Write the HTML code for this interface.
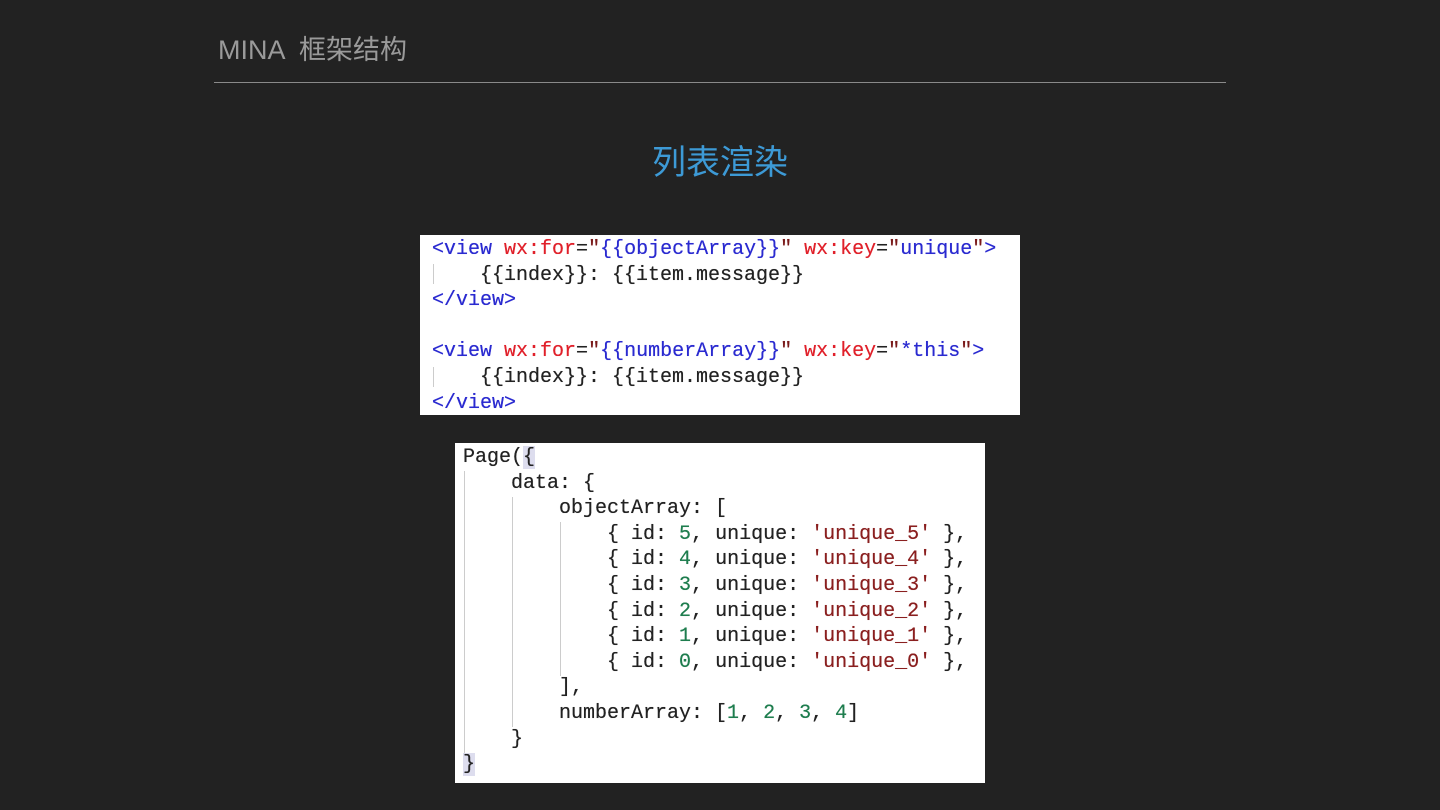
<!DOCTYPE html>
<html><head><meta charset="utf-8"><style>
body{margin:0;width:1440px;height:810px;background:#222222;position:relative;overflow:hidden;font-family:"Liberation Sans","Noto Sans CJK SC",sans-serif}
.t{position:absolute;left:218px;top:32px;font-size:27px;color:#9a9a9a;line-height:36px;white-space:pre}
.hr{position:absolute;left:214px;top:82px;width:1012px;height:1px;background:#8a8a8a}
.h{position:absolute;left:0;width:1440px;top:141px;text-align:center;font-size:34px;color:#3d9ad6;line-height:44px}
.box{position:absolute;background:#fff;font-family:"Liberation Mono",monospace;font-size:20px;color:#222;overflow:hidden;text-shadow:0 0 0.4px currentColor}
.ln{height:25.6px;line-height:25.6px;white-space:pre}
.b{color:#2a2ad0}.r{color:#e0202a}.m{color:#8a1f1f}.g{color:#1e7d4e}.k{color:#7a1a1a}
.bar{position:absolute;width:1px;background:#ccc}
.in{position:absolute}
</style></head><body>
<div class="t">MINA  框架结构</div>
<div class="hr"></div>
<div class="h">列表渲染</div>
<div class="box" style="left:420px;top:235px;width:600px;height:180px;">
<div class="bar" style="left:13px;top:29px;height:20px"></div>
<div class="bar" style="left:13px;top:132px;height:20px"></div>
<div class="in" style="left:12px;top:2px"><div class="ln"><span class="b">&lt;view</span> <span class="r">wx:for</span>=<span class="k">"</span><span class="b">{{objectArray}}</span><span class="k">"</span> <span class="r">wx:key</span>=<span class="k">"</span><span class="b">unique</span><span class="k">"</span><span class="b">&gt;</span></div><div class="ln">    {{index}}: {{item.message}}</div><div class="ln b">&lt;/view&gt;</div><div class="ln"> </div><div class="ln"><span class="b">&lt;view</span> <span class="r">wx:for</span>=<span class="k">"</span><span class="b">{{numberArray}}</span><span class="k">"</span> <span class="r">wx:key</span>=<span class="k">"</span><span class="b">*this</span><span class="k">"</span><span class="b">&gt;</span></div><div class="ln">    {{index}}: {{item.message}}</div><div class="ln b">&lt;/view&gt;</div></div>
</div>
<div class="box" style="left:455px;top:443px;width:530px;height:340px;">
<div class="bar" style="left:9px;top:28px;height:282px"></div>
<div class="bar" style="left:57px;top:54px;height:230px"></div>
<div class="bar" style="left:105px;top:79px;height:154px"></div>
<div class="in" style="left:8px;top:2px"><div class="ln">Page(<span style="background:#dde">{</span></div><div class="ln">    data: {</div><div class="ln">        objectArray: [</div><div class="ln">            { id: <span class="g">5</span>, unique: <span class="m">'unique_5'</span> },</div><div class="ln">            { id: <span class="g">4</span>, unique: <span class="m">'unique_4'</span> },</div><div class="ln">            { id: <span class="g">3</span>, unique: <span class="m">'unique_3'</span> },</div><div class="ln">            { id: <span class="g">2</span>, unique: <span class="m">'unique_2'</span> },</div><div class="ln">            { id: <span class="g">1</span>, unique: <span class="m">'unique_1'</span> },</div><div class="ln">            { id: <span class="g">0</span>, unique: <span class="m">'unique_0'</span> },</div><div class="ln">        ],</div><div class="ln">        numberArray: [<span class="g">1</span>, <span class="g">2</span>, <span class="g">3</span>, <span class="g">4</span>]</div><div class="ln">    }</div><div class="ln"><span style="background:#dde">}</span></div></div>
</div>
</body></html>
